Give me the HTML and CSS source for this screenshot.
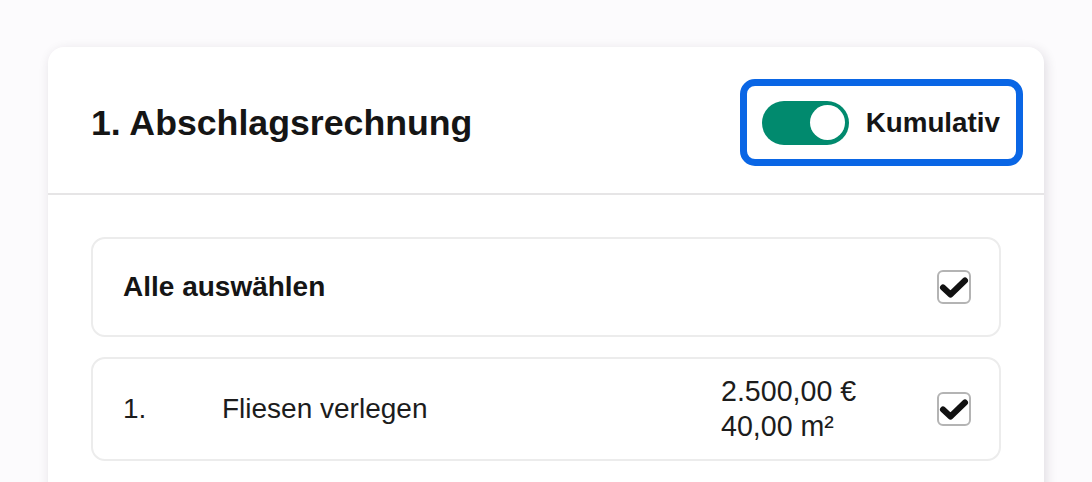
FILE: index.html
```html
<!DOCTYPE html>
<html lang="de">
<head>
<meta charset="utf-8">
<title>Abschlagsrechnung</title>
<link rel="stylesheet" href="styles.css">
</head>
<body>
<div class="page">
  <section class="card">
    <header class="card-header">
      <h1 class="title">1. Abschlagsrechnung</h1>
      <label class="toggle-box">
        <span class="switch"><span class="knob"></span></span>
        <span class="toggle-label">Kumulativ</span>
      </label>
    </header>
    <div class="card-body">
      <div class="row row-all">
        <span class="all-label">Alle auswählen</span>
        <span class="checkbox">
          <svg viewBox="0 0 34 34" width="34" height="34"><path d="M6 17.5 L13.5 24.5 L28 10.5" fill="none" stroke="#111" stroke-width="6" stroke-linecap="round" stroke-linejoin="round"/></svg>
        </span>
      </div>
      <div class="row row-item">
        <span class="pos">1.</span>
        <span class="name">Fliesen verlegen</span>
        <span class="amount"><span>2.500,00 €</span><span>40,00 m²</span></span>
        <span class="checkbox">
          <svg viewBox="0 0 34 34" width="34" height="34"><path d="M6 17.5 L13.5 24.5 L28 10.5" fill="none" stroke="#111" stroke-width="6" stroke-linecap="round" stroke-linejoin="round"/></svg>
        </span>
      </div>
    </div>
  </section>
</div>
</body>
</html>
```

FILE: styles.css
```css
html, body {
  margin: 0;
  padding: 0;
  background: #fcfbfd;
  font-family: "Liberation Sans", Arial, sans-serif;
  color: #151515;
  overflow: hidden;
}

.page {
  padding: 47px 48px 0 48px;
}

.card {
  background: #ffffff;
  border-radius: 16px;
  box-shadow: 2px 3px 12px rgba(40, 30, 50, 0.14);
  height: 460px;
}

.card-header {
  display: flex;
  align-items: center;
  justify-content: space-between;
  height: 148px;
  box-sizing: border-box;
  padding: 33px 21px 28px 43px;
  border-bottom: 2px solid #e6e5e6;
}

.title {
  margin: 0;
  font-size: 35.7px;
  font-weight: 700;
  color: #151515;
  line-height: 1;
  padding-top: 2px;
}

.toggle-box {
  display: flex;
  align-items: center;
  gap: 17px;
  height: 87px;
  box-sizing: border-box;
  border: 7px solid #0a66e5;
  border-radius: 15px;
  padding: 0 16px 0 15px;
}

.switch {
  display: flex;
  align-items: center;
  justify-content: flex-end;
  width: 87px;
  height: 44px;
  box-sizing: border-box;
  padding-right: 4px;
  border-radius: 22px;
  background: #018a6e;
}

.knob {
  width: 35px;
  height: 35px;
  border-radius: 50%;
  background: #ffffff;
}

.toggle-label {
  font-size: 27.8px;
  font-weight: 700;
  color: #151515;
}

.card-body {
  display: flex;
  flex-direction: column;
  gap: 20px;
  padding: 42px 43px 0 43px;
}

.row {
  display: flex;
  align-items: center;
  border: 2px solid #ececec;
  border-radius: 14px;
  box-sizing: border-box;
  padding: 0 28px 0 30px;
  font-size: 28px;
}

.row-all {
  height: 100px;
  justify-content: space-between;
}

.all-label {
  font-weight: 700;
  color: #151515;
}

.row-item {
  height: 104px;
  color: #1c1c1c;
}

.pos {
  width: 99px;
  flex: none;
}

.name {
  flex: 1;
}

.amount {
  display: flex;
  flex-direction: column;
  width: 216px;
  line-height: 35px;
  font-size: 28.6px;
  flex: none;
}

.checkbox {
  display: block;
  width: 34px;
  height: 34px;
  box-sizing: border-box;
  border: 2px solid #b4b4b4;
  border-radius: 6px;
  position: relative;
  flex: none;
}

.checkbox svg {
  position: absolute;
  left: -2px;
  top: -2px;
}
```
